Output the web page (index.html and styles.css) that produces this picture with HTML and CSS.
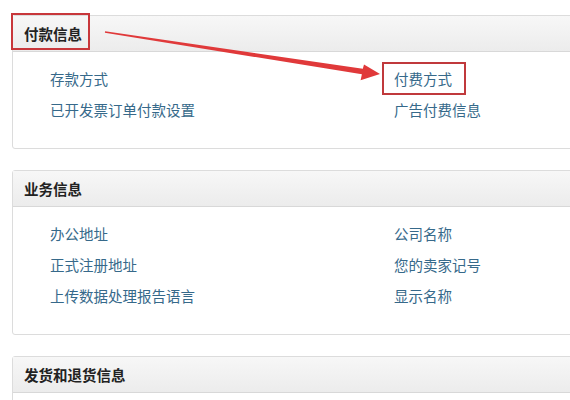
FILE: index.html
```html
<!DOCTYPE html>
<html lang="zh-CN">
<head>
<meta charset="utf-8">
<link rel="stylesheet" href="styles.css">
</head>
<body>
<div class="page">
  <section class="panel">
    <div class="panel-head"><span class="title marked">付款信息</span></div>
    <div class="panel-body">
      <a class="link">存款方式</a>
      <a class="link marked-link">付费方式</a>
      <a class="link">已开发票订单付款设置</a>
      <a class="link">广告付费信息</a>
    </div>
  </section>
  <section class="panel">
    <div class="panel-head"><span class="title">业务信息</span></div>
    <div class="panel-body">
      <a class="link">办公地址</a>
      <a class="link">公司名称</a>
      <a class="link">正式注册地址</a>
      <a class="link">您的卖家记号</a>
      <a class="link">上传数据处理报告语言</a>
      <a class="link">显示名称</a>
    </div>
  </section>
  <section class="panel">
    <div class="panel-head"><span class="title">发货和退货信息</span></div>
    <div class="panel-body"></div>
  </section>
  <svg class="arrow" width="570" height="400" viewBox="0 0 570 400">
    <polygon points="105.1,31.2 362.8,68.8 364,64.6 380,74 360.6,80.2 361.9,74.2 104.9,32.8" fill="#e0393a"/>
  </svg>
</div>
</body>
</html>
```
FILE: styles.css
```css
html, body {
  margin: 0;
  padding: 0;
  background: #fff;
  overflow: hidden;
}
.page {
  position: relative;
  width: 570px;
  height: 400px;
  padding: 15px 0 0 12px;
  box-sizing: border-box;
  overflow: hidden;
  font-family: "Noto Sans CJK SC", "Noto Sans", sans-serif;
}
.panel {
  width: 600px;
  border: 1px solid #dcdcdc;
  border-radius: 3px;
  margin-bottom: 21px;
  background: #fff;
}
.panel-head {
  height: 35px;
  display: flex;
  align-items: center;
  background: linear-gradient(#f7f7f7, #ececec);
  border-bottom: 1px solid #d8d8d8;
  padding-left: 11px;
}
.title {
  position: relative;
  font-size: 14.5px;
  font-weight: bold;
  color: #222;
}
.marked::after {
  content: "";
  position: absolute;
  left: -13px;
  top: -10px;
  width: 75px;
  height: 33px;
  border: 2px solid #c8373b;
}
.panel-body {
  display: grid;
  grid-template-columns: 344px auto;
  justify-content: start;
  padding: 11px 0 23px 37px;
}
.link {
  position: relative;
  font-size: 14.5px;
  line-height: 31px;
  color: #36698a;
  text-decoration: none;
  justify-self: start;
}
.marked-link::after {
  content: "";
  position: absolute;
  left: -12px;
  top: -1px;
  width: 80px;
  height: 29px;
  border: 2px solid #c0393c;
}
.arrow {
  position: absolute;
  left: 0;
  top: 0;
  pointer-events: none;
}
```
